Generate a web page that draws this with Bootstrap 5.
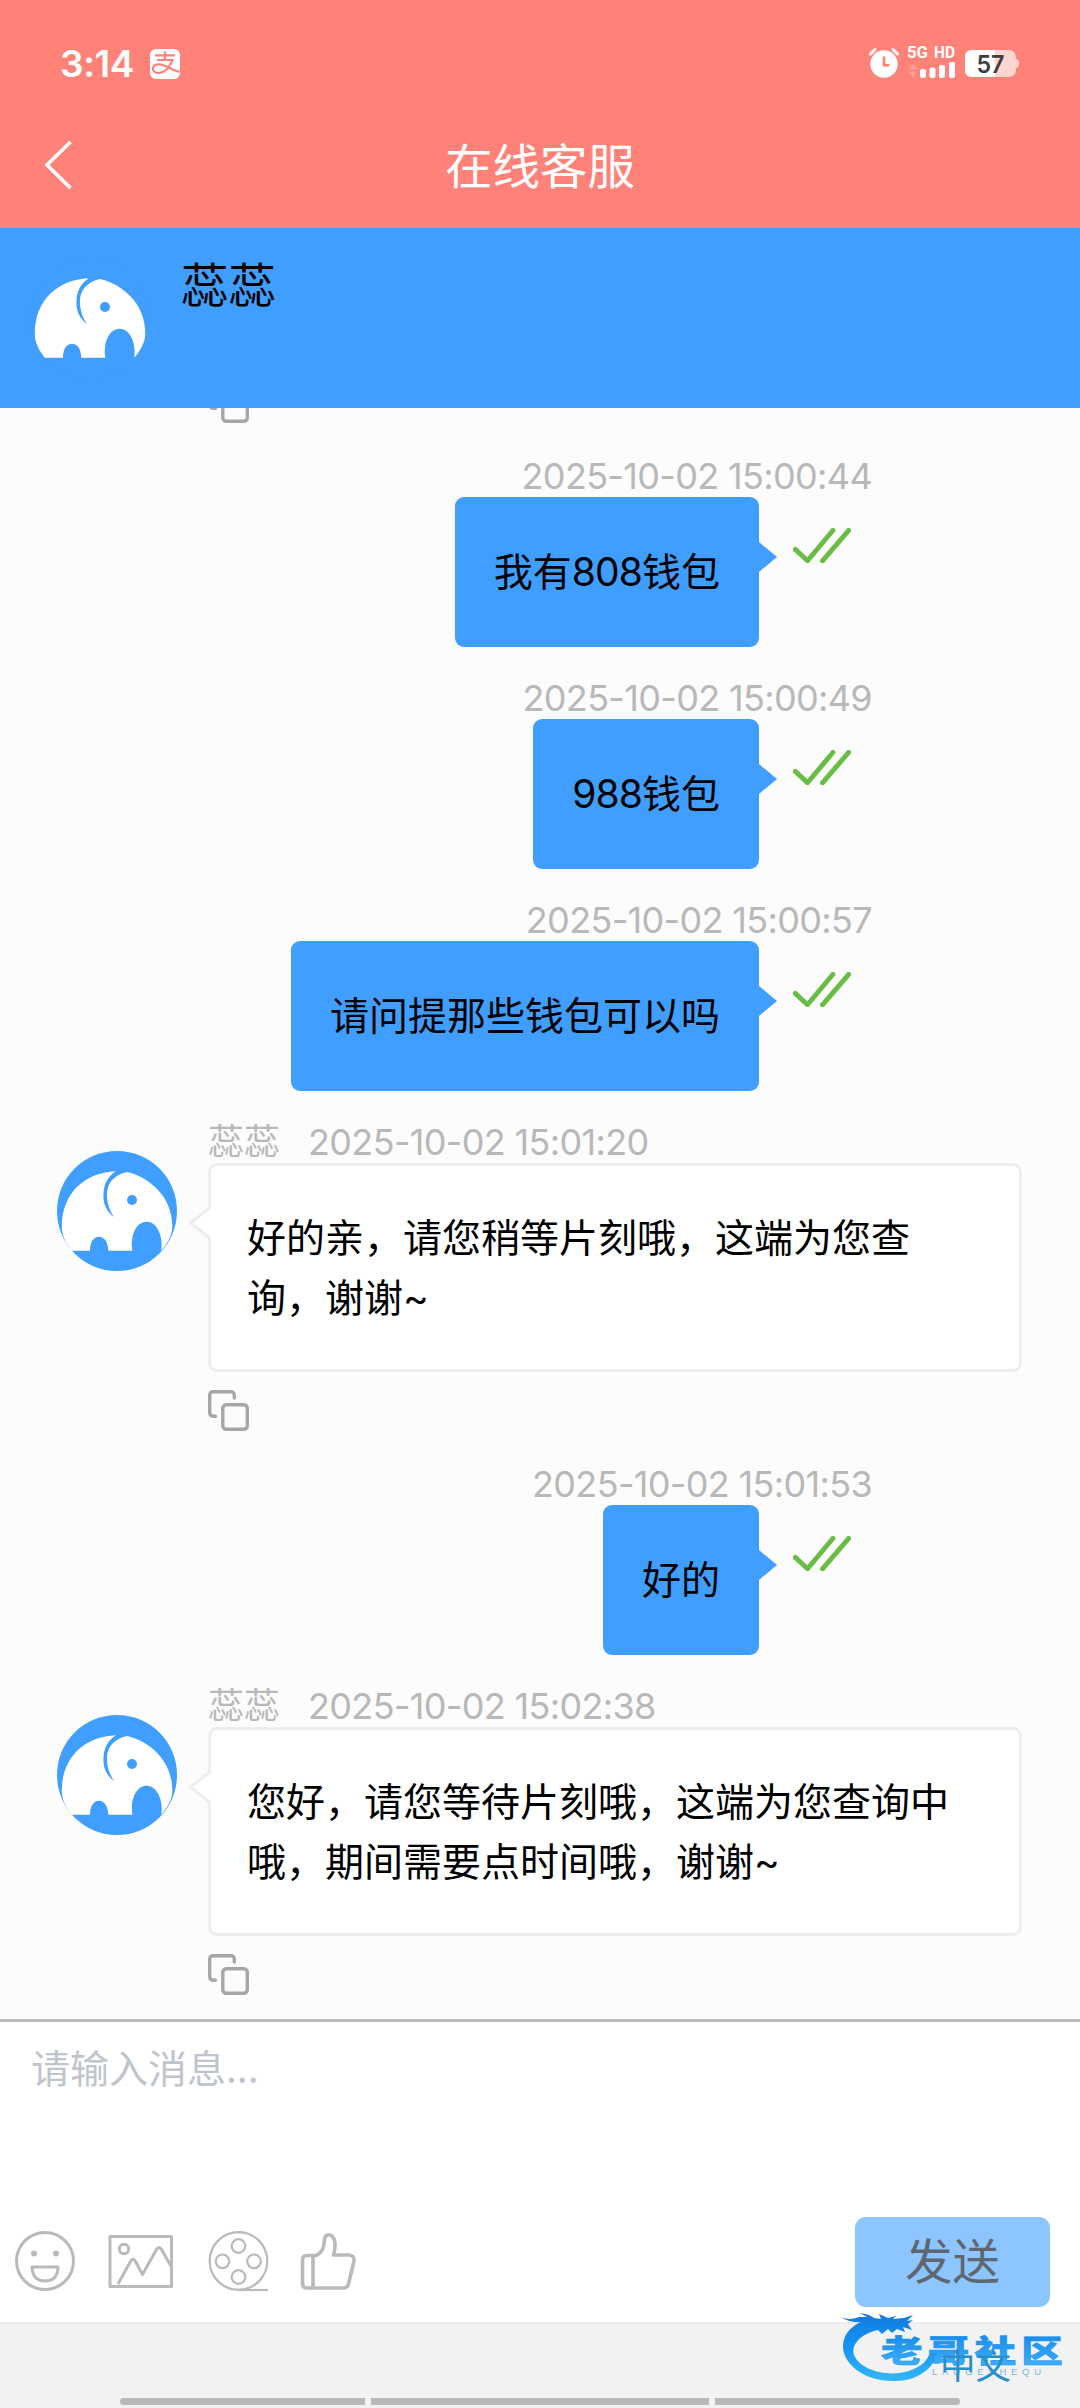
<!DOCTYPE html>
<html lang="zh-CN">
<head>
<meta charset="utf-8">
<meta name="viewport" content="width=device-width, initial-scale=1">
<title>在线客服</title>
<link href="https://cdn.jsdelivr.net/npm/bootstrap@5.3.0/dist/css/bootstrap.min.css" rel="stylesheet">
<style>
  body { width: 1080px; height: 2408px; overflow: hidden; font-family: Inter, "Noto Sans CJK SC", sans-serif; font-size: 39px; line-height: 60px; color: #000; background: #fff; }
  svg { display: block; flex: none; overflow: visible; }
  .app-top { height: 228px; background: #ff8279; color: #fff; }
  .status-row { height: 84px; padding: 44px 61px 0 60px; line-height: 40px; }
  .clock-text { font-size: 37px; font-weight: 600; letter-spacing: -.4px; width: 90px; }
  .title-row { height: 144px; padding: 32px 45px 0; }
  .page-title { font-size: 47.500px; line-height: 60px; font-weight: 400; font-family: "Noto Sans CJK SC", sans-serif; }
  .back-icon { margin-bottom: 14px; }
  .agent-bar { height: 180px; background: #409eff; padding: 27px 30px; }
  .agent-bar svg { margin-top: 3px; }
  .agent-name { font-size: 47.500px; line-height: 56px; margin-left: 31px; font-family: "Noto Sans CJK SC", sans-serif; }
  .chat-log { height: 1611px; background: #fcfcfc; padding-bottom: 24px; }
  .stamp { font-size: 36px; line-height: 42px; height: 42px; color: #b8b8b8; white-space: nowrap; }
  .stamp time { letter-spacing: -.66px; }
  .msg-out { padding-right: 208px; margin-bottom: 30px; }
  .bubble-out { position: relative; background: #409eff; border-radius: 9px; padding: 45px 39px; white-space: nowrap; margin-right: 34px; }
  .bubble-out::after { content: ""; position: absolute; left: 100%; top: 45px; border: solid transparent; border-width: 15px 0 15px 18px; border-left-color: #409eff; }
  .digits { letter-spacing: -.900px; }
  .ticks { margin: 31px 21px 0 0; }
  .msg-in { padding: 0 58px 0 57px; margin-bottom: 32px; }
  .msg-in:last-child { margin-bottom: 0; }
  .avatar-in { margin: 30px 31px 0 0; }
  .bubble-in { position: relative; width: 814px; height: 209px; background: #fff; border: 3px solid #eee; border-radius: 9px; padding: 42px 36px 36px; margin-bottom: 18px; }
  .bubble-in svg { position: absolute; left: -22px; top: 40px; }
  .nick { margin-right: 28px; }
  .composer { height: 303px; border-top: 3px solid #bbb; background: #fff; }
  .composer textarea { height: 150px; border: 0; padding: 14px 31px; font-size: 39px; line-height: 60px; resize: none; }
  .composer textarea::placeholder { color: #c0c4cc; opacity: 1; font-weight: 400; font-family: "Noto Sans CJK SC", sans-serif; }
  .tools-row { padding: 45px 30px 0 15px; height: 150px; }
  .tools-icons { margin-top: 13px; }
  .btn-send { width: 195px; height: 90px; border: 0; border-radius: 11px; background: #8cc5ff; color: #5f6670; font-size: 47.500px; line-height: 60px; padding: 0 0 6px; font-family: "Noto Sans CJK SC", sans-serif; }
  .foot { height: 86px; background: #f2f2f2; border-top: 2px solid #ececec; position: relative; }
  .lang { font-size: 35.500px; line-height: 40px; color: #2b8fc7; padding: 20px 69px 0 0; font-family: "Noto Sans CJK SC", sans-serif; position: relative; z-index: 1; }
  .brand-mark { position: absolute; left: 837px; top: -14px; }
  .home-bars { gap: 6px; padding: 0 120px 3px; }
  .home-bars i { height: 7px; background: #b9b9b9; }
</style>
</head>
<body>
<svg width="0" height="0" class="position-absolute">
  <symbol id="elephant" viewBox="0 0 120 120">
    <circle cx="60" cy="60" r="60" fill="#409eff"/>
    <path fill="#fff" d="M14.8 99.7C8 91 4.8 84 4.8 75.3C5 43 27 21.5 58.8 20.3C50 25.500 46.400 35 46.400 45C46.400 54 50.500 61.500 57.100 66C52.500 59.500 49.900 52 49.900 43C50.200 32 57.500 23.500 69.900 21C92 26 115.300 45 115.300 75.300C115.300 84 111 92 104.300 99.700C106.500 84 99.500 70.700 89.500 70.700C79 70.700 73 85 75.400 99.700H51.300C51 91 47.500 85.700 42 85.700C36.500 85.700 33 91 33 99.700Z"/>
    <circle cx="75" cy="49" r="5" fill="#409eff"/>
  </symbol>
  <symbol id="ticks" viewBox="0 0 58 35">
    <path d="M2.300 21.400L14.500 32.800L40 2.300M29.500 32.800L55.700 2.300" fill="none" stroke="#69bd45" stroke-width="4.900" stroke-linecap="round" stroke-linejoin="round"/>
  </symbol>
  <symbol id="copy" viewBox="0 0 41 41">
    <g fill="none" stroke="#a6a6a6" stroke-width="3.400" stroke-linecap="round">
      <rect x="14.800" y="14.800" width="24.500" height="24.500" rx="3.500"/>
      <path d="M26.300 8V5.500Q26.300 1.700 22.500 1.700H5.500Q1.700 1.700 1.700 5.500V22.300Q1.700 26.200 5.500 26.200H7.500"/>
    </g>
  </symbol>
  <symbol id="beak" viewBox="0 0 22 34">
    <path d="M22 2L1.500 17L22 32Z" fill="#fff"/>
    <path d="M20.500 2L1.500 17L20.500 32" fill="none" stroke="#eee" stroke-width="3"/>
  </symbol>
</svg>

<header class="app-top">
  <div class="status-row d-flex justify-content-between">
    <div class="d-flex align-items-center">
      <span class="clock-text">3:14</span>
      <svg width="30" height="30" viewBox="0 0 30 30">
        <rect width="30" height="30" rx="6" fill="#fff"/>
        <path d="M5 6.300H25M15 2.500V11M7 11H22.500C20.500 17 15 24 8.500 24C4.500 24 2.500 21.500 3 19C4 14.500 11 14.500 16.500 17.500Q23 21 29.500 23" fill="none" stroke="#ff8279" stroke-width="2.200"/>
      </svg>
    </div>
    <svg width="152" height="36" viewBox="868 46 152 36">
      <circle cx="885" cy="66" r="13.700" fill="#fff"/>
      <path d="M871.500 56L876 51.500M898.500 56L894 51.500" stroke="#fff" stroke-width="3" stroke-linecap="round"/>
      <path d="M885 58.500V67.200H890.500" fill="none" stroke="#ff8279" stroke-width="2.600"/>
      <g fill="#fff" font-family="Roboto, sans-serif" font-weight="700" font-size="17">
        <text x="908" y="59.500" textLength="21" lengthAdjust="spacingAndGlyphs">5G</text>
        <text x="935" y="59.500" textLength="21" lengthAdjust="spacingAndGlyphs">HD</text>
      </g>
      <path d="M909 71.500L914 65.500L919 71.500ZM909 73.500L914 79.500L919 73.500Z" fill="#ff9d96"/>
      <g fill="#fff">
        <rect x="921" y="71" width="6" height="9" rx="2"/><rect x="930.500" y="69.500" width="6" height="10.500" rx="2"/><rect x="940" y="67" width="6" height="13" rx="2"/><rect x="950" y="64" width="6" height="16" rx="2"/>
      </g>
      <rect x="966" y="52" width="51" height="27" rx="7" fill="#ffd5d2"/>
      <path d="M973 52H996V79H973Q966 79 966 72V59Q966 52 973 52Z" fill="#fff"/>
      <path d="M1017 61Q1020 61 1020 65.500T1017 70Z" fill="#ffd5d2"/>
      <text x="991.500" y="74.500" text-anchor="middle" font-family="Inter, sans-serif" font-weight="600" font-size="24.500" textLength="28" lengthAdjust="spacingAndGlyphs" fill="#3b4040">57</text>
    </svg>
  </div>
  <div class="title-row d-flex align-items-center justify-content-between">
    <svg class="back-icon" width="27" height="50" viewBox="0 0 27 50"><path d="M25.500 2L2 25L25.500 48" fill="none" stroke="#fff" stroke-width="3.600"/></svg>
    <h1 class="page-title mb-3">在线客服</h1>
    <svg width="27" height="50"></svg>
  </div>
</header>

<section class="agent-bar d-flex">
  <svg width="120" height="120"><use href="#elephant"/></svg>
  <div class="agent-name">蕊蕊</div>
</section>

<main class="chat-log d-flex flex-column justify-content-end overflow-hidden">
  <article class="msg-in d-flex">
    <svg width="151" height="41"></svg>
    <svg width="41" height="41"><use href="#copy"/></svg>
  </article>
  <article class="msg-out d-flex flex-column align-items-end">
    <div class="stamp"><time>2025-10-02 15:00:44</time></div>
    <div class="d-flex align-items-start"><div class="bubble-out">我有<span class="digits">808</span>钱包</div><svg class="ticks" width="58" height="35"><use href="#ticks"/></svg></div>
  </article>
  <article class="msg-out d-flex flex-column align-items-end">
    <div class="stamp"><time>2025-10-02 15:00:49</time></div>
    <div class="d-flex align-items-start"><div class="bubble-out"><span class="digits">988</span>钱包</div><svg class="ticks" width="58" height="35"><use href="#ticks"/></svg></div>
  </article>
  <article class="msg-out d-flex flex-column align-items-end">
    <div class="stamp"><time>2025-10-02 15:00:57</time></div>
    <div class="d-flex align-items-start"><div class="bubble-out">请问提那些钱包可以吗</div><svg class="ticks" width="58" height="35"><use href="#ticks"/></svg></div>
  </article>
  <article class="msg-in d-flex align-items-start">
    <svg class="avatar-in" width="120" height="120"><use href="#elephant"/></svg>
    <div>
      <div class="stamp"><span class="nick">蕊蕊</span><time>2025-10-02 15:01:20</time></div>
      <div class="bubble-in"><svg width="22" height="34"><use href="#beak"/></svg>好的亲，请您稍等片刻哦，这端为您查询，谢谢~</div>
      <svg width="41" height="41"><use href="#copy"/></svg>
    </div>
  </article>
  <article class="msg-out d-flex flex-column align-items-end">
    <div class="stamp"><time>2025-10-02 15:01:53</time></div>
    <div class="d-flex align-items-start"><div class="bubble-out">好的</div><svg class="ticks" width="58" height="35"><use href="#ticks"/></svg></div>
  </article>
  <article class="msg-in d-flex align-items-start">
    <svg class="avatar-in" width="120" height="120"><use href="#elephant"/></svg>
    <div>
      <div class="stamp"><span class="nick">蕊蕊</span><time>2025-10-02 15:02:38</time></div>
      <div class="bubble-in"><svg width="22" height="34"><use href="#beak"/></svg>您好，请您等待片刻哦，这端为您查询中哦，期间需要点时间哦，谢谢~</div>
      <svg width="41" height="41"><use href="#copy"/></svg>
    </div>
  </article>
</main>

<section class="composer">
  <textarea class="form-control rounded-0 shadow-none" placeholder="请输入消息..."></textarea>
  <div class="tools-row d-flex align-items-start justify-content-between">
    <svg width="345" height="62" viewBox="15 2230 345 62" class="tools-icons" fill="none" stroke="#bababa" stroke-linejoin="round">
      <g stroke-width="3">
        <circle cx="45" cy="2261" r="28.500"/>
        <path d="M32 2267H58Q57.500 2281 45 2281T32 2267Z"/>
        <circle cx="34" cy="2253.500" r="3" fill="#bababa" stroke="none"/><circle cx="56" cy="2253.500" r="3" fill="#bababa" stroke="none"/>
        <rect x="110" y="2236.500" width="61.500" height="50"/>
        <circle cx="124" cy="2249" r="4.700"/>
        <path d="M118 2284L130.500 2261.500Q133 2257 135.500 2261.500L142.500 2274.500L156.500 2249.500Q159 2245.500 161.500 2249.500L172 2268"/>
      </g>
      <g stroke-width="2.200">
        <circle cx="238.500" cy="2261" r="28.800"/>
        <circle cx="238.500" cy="2246" r="6.800"/><circle cx="222.500" cy="2261.300" r="6.800"/><circle cx="254" cy="2261.300" r="6.800"/><circle cx="238.500" cy="2277" r="6.800"/>
        <path d="M238.500 2290H268" />
      </g>
      <path stroke-width="3.600" d="M307 2255.500H316C323 2252.500 324 2246 324.500 2240Q325 2234.500 329 2234.800C336 2236 336 2246 333.500 2255H349Q354.500 2255.500 354 2261L348.500 2284Q347.500 2288 343.500 2288H307Q302.500 2288 302.500 2283.500V2260Q302.500 2255.500 307 2255.500ZM313 2256V2287"/>
    </svg>
    <button class="btn btn-send" type="button">发送</button>
  </div>
</section>

<footer class="foot d-flex flex-column justify-content-between">
  <div class="lang text-end">中文</div>
  <div class="home-bars d-flex">
    <i class="flex-shrink-0 rounded-start-pill" style="width:245px"></i>
    <i class="flex-grow-1"></i>
    <i class="flex-shrink-0 rounded-end-pill" style="width:245px"></i>
  </div>
  <svg class="brand-mark" width="230" height="76" viewBox="838 2310 230 76">
    <defs>
      <linearGradient id="sea" x1="0" y1="2314" x2="0" y2="2382" gradientUnits="userSpaceOnUse"><stop offset="0" stop-color="#127be0"/><stop offset=".5" stop-color="#1596f5"/><stop offset="1" stop-color="#35b8f8"/></linearGradient>
      <linearGradient id="ink" x1="0" y1="0" x2="0" y2="1"><stop offset="0" stop-color="#0b80e8"/><stop offset="1" stop-color="#45b6fa"/></linearGradient>
    </defs>
    <path fill="url(#sea)" d="M842 2317Q850 2321 860 2317L868 2317L861 2313Q870 2314 875 2318L882 2319L880 2314L889 2318L897 2316L894 2319L905 2318L914 2315L908 2321L914 2320L909 2324L913 2330L904 2327L906 2332L898 2329L893 2333L889 2329L883 2334L879 2330C861 2334 852 2345 855 2355C861 2371 893 2379 915 2369Q927 2364 931 2353L939 2352C935 2368 919 2381 896 2381C866 2382 843 2364 844 2345C845 2332 855 2325 862 2322Q850 2323 842 2317Z"/>
    <g transform="translate(882 2361.500) scale(1.340 1)">
      <text x="0" y="0" font-family="'Noto Sans CJK SC', sans-serif" font-weight="900" font-size="31" letter-spacing="3.900" fill="url(#ink)" stroke="#1d94f2" stroke-width=".6">老哥社区</text>
    </g>
    <text x="933" y="2374.500" font-family="'Liberation Sans', sans-serif" font-size="9.500" textLength="109" fill="#75b6e8">LAOGESHEQU</text>
  </svg>
</footer>
<script src="https://cdn.jsdelivr.net/npm/bootstrap@5.3.0/dist/js/bootstrap.bundle.min.js"></script>
</body>
</html>
